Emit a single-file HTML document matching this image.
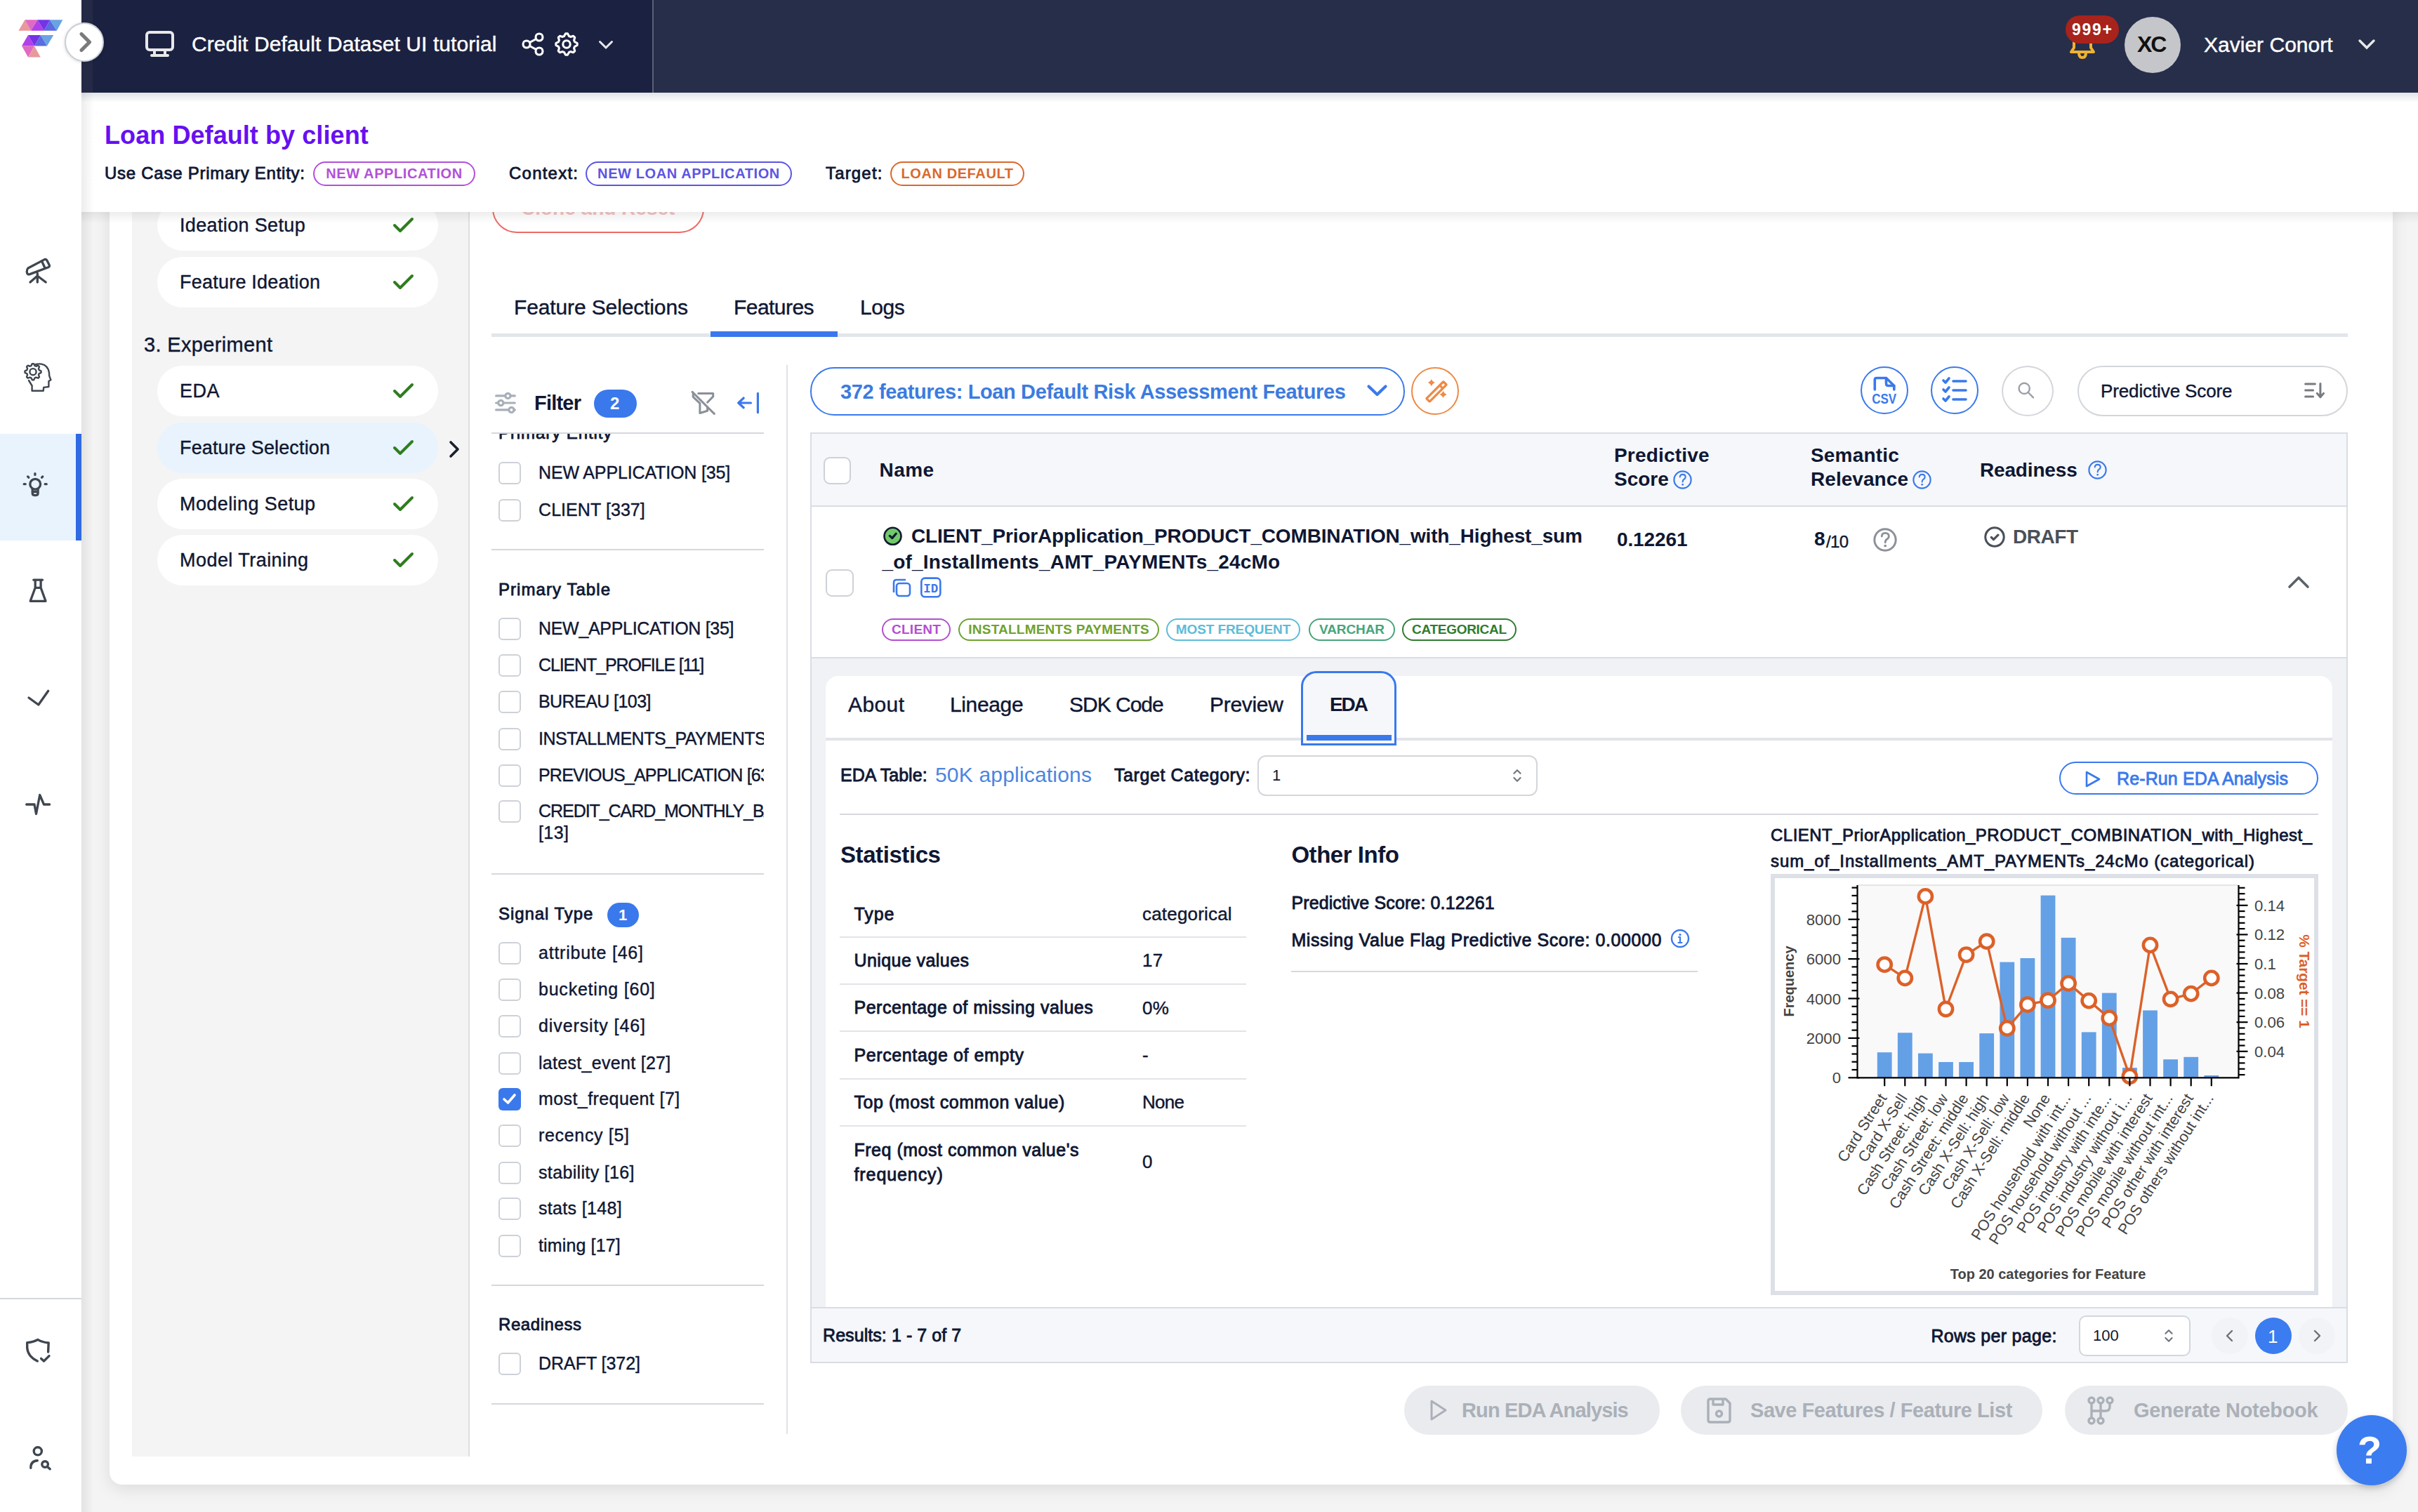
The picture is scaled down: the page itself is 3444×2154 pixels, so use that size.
<!DOCTYPE html><html><head><meta charset="utf-8"><style>
html,body{margin:0;padding:0;width:3444px;height:2154px;overflow:hidden;font-family:"Liberation Sans",sans-serif;}
.t{position:absolute;white-space:nowrap;line-height:1;}
.r{position:absolute;display:block;}
</style></head><body>
<div class="r" style="left:0.0px;top:0.0px;width:3444.0px;height:2154.0px;background:#f4f4f4;"></div>
<div class="r" style="left:156.0px;top:150.0px;width:3252.0px;height:1965.0px;background:#ffffff;border-radius:18px;box-shadow:0 6px 24px rgba(0,0,0,0.10);"></div>
<div class="r" style="left:188.0px;top:150.0px;width:479.0px;height:1925.0px;background:#f4f4f4;border-right:2px solid #dcdfe4;"></div>
<div class="r" style="left:224.0px;top:285.0px;width:400.0px;height:72.0px;background:#ffffff;border-radius:36px;"></div>
<div class="t" style="left:256.0px;top:307.5px;font-size:27px;letter-spacing:0.351px;color:#0f1733;-webkit-text-stroke:0.4px #0f1733;">Ideation Setup</div>
<svg class="r" style="left:558px;top:305px;" width="34" height="30" viewBox="0 0 34 30"><path d="M4 16 L12 24 L29 7" fill="none" stroke="#2f7d1f" stroke-width="4" stroke-linecap="round" stroke-linejoin="round"/></svg>
<div class="r" style="left:224.0px;top:366.0px;width:400.0px;height:72.0px;background:#ffffff;border-radius:36px;"></div>
<div class="t" style="left:256.0px;top:388.5px;font-size:27px;letter-spacing:0.225px;color:#0f1733;-webkit-text-stroke:0.4px #0f1733;">Feature Ideation</div>
<svg class="r" style="left:558px;top:386px;" width="34" height="30" viewBox="0 0 34 30"><path d="M4 16 L12 24 L29 7" fill="none" stroke="#2f7d1f" stroke-width="4" stroke-linecap="round" stroke-linejoin="round"/></svg>
<div class="t" style="left:205.0px;top:476.5px;font-size:29px;letter-spacing:0.341px;color:#0f1733;-webkit-text-stroke:0.4px #0f1733;">3. Experiment</div>
<div class="r" style="left:224.0px;top:521.0px;width:400.0px;height:72.0px;background:#ffffff;border-radius:36px;"></div>
<div class="t" style="left:256.0px;top:543.5px;font-size:27px;letter-spacing:0.5px;color:#0f1733;-webkit-text-stroke:0.4px #0f1733;">EDA</div>
<svg class="r" style="left:558px;top:541px;" width="34" height="30" viewBox="0 0 34 30"><path d="M4 16 L12 24 L29 7" fill="none" stroke="#2f7d1f" stroke-width="4" stroke-linecap="round" stroke-linejoin="round"/></svg>
<div class="r" style="left:224.0px;top:602.0px;width:400.0px;height:72.0px;background:#e8f3fd;border-radius:36px;"></div>
<div class="t" style="left:256.0px;top:624.5px;font-size:27px;letter-spacing:0.148px;color:#0f1733;-webkit-text-stroke:0.4px #0f1733;">Feature Selection</div>
<svg class="r" style="left:558px;top:622px;" width="34" height="30" viewBox="0 0 34 30"><path d="M4 16 L12 24 L29 7" fill="none" stroke="#2f7d1f" stroke-width="4" stroke-linecap="round" stroke-linejoin="round"/></svg>
<div class="r" style="left:224.0px;top:682.0px;width:400.0px;height:72.0px;background:#ffffff;border-radius:36px;"></div>
<div class="t" style="left:256.0px;top:704.5px;font-size:27px;letter-spacing:0.413px;color:#0f1733;-webkit-text-stroke:0.4px #0f1733;">Modeling Setup</div>
<svg class="r" style="left:558px;top:702px;" width="34" height="30" viewBox="0 0 34 30"><path d="M4 16 L12 24 L29 7" fill="none" stroke="#2f7d1f" stroke-width="4" stroke-linecap="round" stroke-linejoin="round"/></svg>
<div class="r" style="left:224.0px;top:762.0px;width:400.0px;height:72.0px;background:#ffffff;border-radius:36px;"></div>
<div class="t" style="left:256.0px;top:784.5px;font-size:27px;letter-spacing:0.454px;color:#0f1733;-webkit-text-stroke:0.4px #0f1733;">Model Training</div>
<svg class="r" style="left:558px;top:782px;" width="34" height="30" viewBox="0 0 34 30"><path d="M4 16 L12 24 L29 7" fill="none" stroke="#2f7d1f" stroke-width="4" stroke-linecap="round" stroke-linejoin="round"/></svg>
<svg class="r" style="left:634px;top:624px;" width="26" height="32" viewBox="0 0 26 32"><path d="M8 6 L18 16 L8 26" fill="none" stroke="#1a1f2e" stroke-width="3.6" stroke-linecap="round" stroke-linejoin="round"/></svg>
<div class="r" style="left:701.0px;top:262.0px;width:302.0px;height:70.0px;background:#fff;border:2px solid #ee6a64;box-sizing:border-box;border-radius:35px;"></div>
<div class="t" style="left:742.0px;top:283.0px;font-size:28px;font-weight:700;color:#f2c2bf;">Clone and Reset</div>
<div class="t" style="left:732.0px;top:423.0px;font-size:30px;letter-spacing:-0.127px;color:#0f1733;-webkit-text-stroke:0.4px #0f1733;">Feature Selections</div>
<div class="t" style="left:1045.0px;top:423.0px;font-size:30px;letter-spacing:-0.542px;color:#0f1733;-webkit-text-stroke:0.4px #0f1733;">Features</div>
<div class="t" style="left:1225.0px;top:423.0px;font-size:30px;letter-spacing:-0.421px;color:#0f1733;-webkit-text-stroke:0.4px #0f1733;">Logs</div>
<div class="r" style="left:700.0px;top:475.0px;width:2644.0px;height:5.0px;background:#e2e5ea;"></div>
<div class="r" style="left:1012.0px;top:472.0px;width:181.0px;height:8.0px;background:#3b78ee;"></div>
<svg class="r" style="left:700px;top:554px;" width="40" height="40" viewBox="0 0 40 40"><g fill="none" stroke="#a8afb8" stroke-width="3.2" stroke-linecap="round"><path d="M6.6 9.9 L33.3 9.9 M6.6 20 L33.3 20 M6.6 29.9 L33.3 29.9"/><circle cx="23.4" cy="9.9" r="3.6" fill="#fff"/><circle cx="13.3" cy="20" r="3.6" fill="#fff"/><circle cx="28.4" cy="29.9" r="3.6" fill="#fff"/></g></svg>
<div class="t" style="left:761.0px;top:559.5px;font-size:29px;font-weight:700;letter-spacing:-0.781px;color:#0f1733;">Filter</div>
<div class="r" style="left:846.0px;top:555.0px;width:61.0px;height:40.0px;background:#3a79ec;border-radius:20px;"></div>
<div class="t" style="left:869.0px;top:563.0px;font-size:24px;font-weight:700;color:#fff;">2</div>
<svg class="r" style="left:982px;top:550px;" width="40" height="46" viewBox="0 0 40 46"><g fill="none" stroke="#8a9099" stroke-width="3" stroke-linecap="round" stroke-linejoin="round"><path d="M4.1 8.4 L35.3 39.4"/><path d="M12.7 10.6 L33.7 10.6 L33.7 14.9 L25.6 23.2"/><path d="M5.2 11.1 L5.2 15.4 L14.9 24.6 L14.9 38.5 L25.6 35.3 L25.6 30"/></g></svg>
<svg class="r" style="left:1046px;top:555px;" width="40" height="38" viewBox="0 0 40 38"><g fill="none" stroke="#3a79ec" stroke-width="3.2" stroke-linecap="round" stroke-linejoin="round"><path d="M33.4 5.3 L33.4 32.7 M23.5 19 L5.7 19 M13.2 12 L5.7 19 L13.2 25.8"/></g></svg>
<div class="r" style="left:700.0px;top:616.0px;width:388.0px;height:2.0px;background:#d4d8de;"></div>
<div class="r" style="left:1120.0px;top:520.0px;width:2.0px;height:1523.0px;background:#dfe2e6;"></div>
<div class="r" style="left:680px;top:618px;width:408px;height:1460px;overflow:hidden;">
<div class="t" style="left:30.0px;top:-13.0px;font-size:24px;letter-spacing:0.922px;color:#0f1733;-webkit-text-stroke:0.82px #0f1733;">Primary Entity</div>
<div class="r" style="left:29.5px;top:39.5px;width:32.0px;height:32.0px;background:#fff;border:2px solid #cdd1d8;box-sizing:border-box;border-radius:6px;"></div>
<div class="t" style="left:87.0px;top:42.5px;font-size:25px;letter-spacing:-0.143px;color:#0f1733;-webkit-text-stroke:0.4px #0f1733;">NEW APPLICATION [35]</div>
<div class="r" style="left:29.5px;top:92.5px;width:32.0px;height:32.0px;background:#fff;border:2px solid #cdd1d8;box-sizing:border-box;border-radius:6px;"></div>
<div class="t" style="left:87.0px;top:95.5px;font-size:25px;letter-spacing:0.071px;color:#0f1733;-webkit-text-stroke:0.4px #0f1733;">CLIENT [337]</div>
<div class="r" style="left:20.0px;top:164.0px;width:388.0px;height:2.0px;background:#d4d8de;"></div>
<div class="t" style="left:30.0px;top:210.0px;font-size:24px;letter-spacing:1.06px;color:#0f1733;-webkit-text-stroke:0.82px #0f1733;">Primary Table</div>
<div class="r" style="left:29.5px;top:261.5px;width:32.0px;height:32.0px;background:#fff;border:2px solid #cdd1d8;box-sizing:border-box;border-radius:6px;"></div>
<div class="t" style="left:87.0px;top:264.5px;font-size:25px;letter-spacing:-0.308px;color:#0f1733;-webkit-text-stroke:0.4px #0f1733;">NEW_APPLICATION [35]</div>
<div class="r" style="left:29.5px;top:313.5px;width:32.0px;height:32.0px;background:#fff;border:2px solid #cdd1d8;box-sizing:border-box;border-radius:6px;"></div>
<div class="t" style="left:87.0px;top:316.5px;font-size:25px;letter-spacing:-1.127px;color:#0f1733;-webkit-text-stroke:0.4px #0f1733;">CLIENT_PROFILE [11]</div>
<div class="r" style="left:29.5px;top:365.5px;width:32.0px;height:32.0px;background:#fff;border:2px solid #cdd1d8;box-sizing:border-box;border-radius:6px;"></div>
<div class="t" style="left:87.0px;top:368.5px;font-size:25px;letter-spacing:-0.576px;color:#0f1733;-webkit-text-stroke:0.4px #0f1733;">BUREAU [103]</div>
<div class="r" style="left:29.5px;top:418.5px;width:32.0px;height:32.0px;background:#fff;border:2px solid #cdd1d8;box-sizing:border-box;border-radius:6px;"></div>
<div class="t" style="left:87.0px;top:421.5px;font-size:25px;letter-spacing:-0.5px;color:#0f1733;-webkit-text-stroke:0.4px #0f1733;">INSTALLMENTS_PAYMENTS [29]</div>
<div class="r" style="left:29.5px;top:470.5px;width:32.0px;height:32.0px;background:#fff;border:2px solid #cdd1d8;box-sizing:border-box;border-radius:6px;"></div>
<div class="t" style="left:87.0px;top:473.5px;font-size:25px;letter-spacing:-0.8px;color:#0f1733;-webkit-text-stroke:0.4px #0f1733;">PREVIOUS_APPLICATION [63]</div>
<div class="r" style="left:29.5px;top:521.5px;width:32.0px;height:32.0px;background:#fff;border:2px solid #cdd1d8;box-sizing:border-box;border-radius:6px;"></div>
<div class="t" style="left:87.0px;top:524.5px;font-size:25px;letter-spacing:-1.05px;color:#0f1733;-webkit-text-stroke:0.4px #0f1733;">CREDIT_CARD_MONTHLY_BALANCE</div>
<div class="t" style="left:87.0px;top:555.5px;font-size:25px;letter-spacing:0.4px;color:#0f1733;-webkit-text-stroke:0.4px #0f1733;">[13]</div>
<div class="r" style="left:20.0px;top:626.0px;width:388.0px;height:2.0px;background:#d4d8de;"></div>
<div class="t" style="left:30.0px;top:672.0px;font-size:24px;letter-spacing:0.945px;color:#0f1733;-webkit-text-stroke:0.82px #0f1733;">Signal Type</div>
<div class="r" style="left:185.0px;top:668.0px;width:45.0px;height:35.0px;background:#3a79ec;border-radius:18px;"></div>
<div class="t" style="left:201.0px;top:675.0px;font-size:22px;font-weight:700;color:#fff;">1</div>
<div class="r" style="left:29.5px;top:723.5px;width:32.0px;height:32.0px;background:#fff;border:2px solid #cdd1d8;box-sizing:border-box;border-radius:6px;"></div>
<div class="t" style="left:87.0px;top:726.5px;font-size:25px;letter-spacing:0.767px;color:#0f1733;-webkit-text-stroke:0.4px #0f1733;">attribute [46]</div>
<div class="r" style="left:29.5px;top:775.5px;width:32.0px;height:32.0px;background:#fff;border:2px solid #cdd1d8;box-sizing:border-box;border-radius:6px;"></div>
<div class="t" style="left:87.0px;top:778.5px;font-size:25px;letter-spacing:0.777px;color:#0f1733;-webkit-text-stroke:0.4px #0f1733;">bucketing [60]</div>
<div class="r" style="left:29.5px;top:828.0px;width:32.0px;height:32.0px;background:#fff;border:2px solid #cdd1d8;box-sizing:border-box;border-radius:6px;"></div>
<div class="t" style="left:87.0px;top:831.0px;font-size:25px;letter-spacing:0.895px;color:#0f1733;-webkit-text-stroke:0.4px #0f1733;">diversity [46]</div>
<div class="r" style="left:29.5px;top:880.5px;width:32.0px;height:32.0px;background:#fff;border:2px solid #cdd1d8;box-sizing:border-box;border-radius:6px;"></div>
<div class="t" style="left:87.0px;top:883.5px;font-size:25px;letter-spacing:0.299px;color:#0f1733;-webkit-text-stroke:0.4px #0f1733;">latest_event [27]</div>
<div class="r" style="left:29.5px;top:931.9px;width:32.0px;height:32.0px;background:#3a79ec;border-radius:6px;"></div>
<svg class="r" style="left:29.5px;top:931.9000000000001px;" width="31" height="31" viewBox="0 0 31 31"><path d="M8 16 L13.5 21 L23 10" fill="none" stroke="#fff" stroke-width="3.6" stroke-linecap="round" stroke-linejoin="round"/></svg>
<div class="t" style="left:87.0px;top:934.9px;font-size:25px;letter-spacing:0.417px;color:#0f1733;-webkit-text-stroke:0.4px #0f1733;">most_frequent [7]</div>
<div class="r" style="left:29.5px;top:984.0px;width:32.0px;height:32.0px;background:#fff;border:2px solid #cdd1d8;box-sizing:border-box;border-radius:6px;"></div>
<div class="t" style="left:87.0px;top:987.0px;font-size:25px;letter-spacing:0.669px;color:#0f1733;-webkit-text-stroke:0.4px #0f1733;">recency [5]</div>
<div class="r" style="left:29.5px;top:1036.5px;width:32.0px;height:32.0px;background:#fff;border:2px solid #cdd1d8;box-sizing:border-box;border-radius:6px;"></div>
<div class="t" style="left:87.0px;top:1039.5px;font-size:25px;letter-spacing:0.351px;color:#0f1733;-webkit-text-stroke:0.4px #0f1733;">stability [16]</div>
<div class="r" style="left:29.5px;top:1088.2px;width:32.0px;height:32.0px;background:#fff;border:2px solid #cdd1d8;box-sizing:border-box;border-radius:6px;"></div>
<div class="t" style="left:87.0px;top:1091.2px;font-size:25px;letter-spacing:0.331px;color:#0f1733;-webkit-text-stroke:0.4px #0f1733;">stats [148]</div>
<div class="r" style="left:29.5px;top:1140.5px;width:32.0px;height:32.0px;background:#fff;border:2px solid #cdd1d8;box-sizing:border-box;border-radius:6px;"></div>
<div class="t" style="left:87.0px;top:1143.5px;font-size:25px;letter-spacing:0.134px;color:#0f1733;-webkit-text-stroke:0.4px #0f1733;">timing [17]</div>
<div class="r" style="left:20.0px;top:1212.0px;width:388.0px;height:2.0px;background:#d4d8de;"></div>
<div class="t" style="left:30.0px;top:1257.0px;font-size:24px;letter-spacing:0.578px;color:#0f1733;-webkit-text-stroke:0.82px #0f1733;">Readiness</div>
<div class="r" style="left:29.5px;top:1308.5px;width:32.0px;height:32.0px;background:#fff;border:2px solid #cdd1d8;box-sizing:border-box;border-radius:6px;"></div>
<div class="t" style="left:87.0px;top:1312.0px;font-size:25px;letter-spacing:-0.042px;color:#0f1733;-webkit-text-stroke:0.4px #0f1733;">DRAFT [372]</div>
<div class="r" style="left:20.0px;top:1381.0px;width:388.0px;height:2.0px;background:#d4d8de;"></div>
</div>
<div class="r" style="left:1154.0px;top:523.0px;width:847.0px;height:69.0px;background:#fff;border:2px solid #3a79ec;box-sizing:border-box;border-radius:34px;"></div>
<div class="t" style="left:1197.0px;top:543.5px;font-size:29px;font-weight:700;letter-spacing:-0.379px;color:#3b7be0;">372 features: Loan Default Risk Assessment Features</div>
<svg class="r" style="left:1940px;top:540px;" width="44" height="34" viewBox="0 0 44 34"><path d="M9.5 10.5 L21.5 22 L33.5 10.5" fill="none" stroke="#3a79ec" stroke-width="4.2" stroke-linecap="round" stroke-linejoin="round"/></svg>
<div class="r" style="left:2010.0px;top:523.0px;width:68.0px;height:68.0px;background:#fff;border:2px solid #ee8a45;box-sizing:border-box;border-radius:50%;"></div>
<svg class="r" style="left:2010px;top:523px;" width="68" height="68" viewBox="0 0 68 68"><g fill="none" stroke="#ee8a45" stroke-width="3.3" stroke-linejoin="round" transform="translate(36 34.9) rotate(-45)"><rect x="-17" y="-3.1" width="34" height="6.2" rx="0.8"/><path d="M9.6 -3.1 L9.6 3.1"/></g><g fill="#ee8a45"><path d="M28.8 17.200000000000003 Q30.172 20.728 33.7 22.1 Q30.172 23.472 28.8 27.0 Q27.428 23.472 23.9 22.1 Q27.428 20.728 28.8 17.200000000000003 Z"/><path d="M45.6 34.0 Q46.972 37.528 50.5 38.9 Q46.972 40.272 45.6 43.8 Q44.228 40.272 40.7 38.9 Q44.228 37.528 45.6 34.0 Z"/></g></svg>
<div class="r" style="left:2650.0px;top:522.0px;width:68.0px;height:68.0px;background:#fff;border:2px solid #3a79ec;box-sizing:border-box;border-radius:50%;"></div>
<svg class="r" style="left:2650px;top:522px;" width="68" height="68" viewBox="0 0 68 68"><g fill="none" stroke="#3a79ec" stroke-width="3.6" stroke-linejoin="round" stroke-linecap="round"><path d="M20.3 33 L20.3 19 Q20.3 16.5 22.8 16.5 L36.5 16.5 L47.8 27.5 L47.8 33"/><path d="M36.5 16.5 L36.5 24.5 Q36.5 27.5 39.5 27.5 L47.8 27.5"/></g><text x="33.7" y="53" text-anchor="middle" font-family="Liberation Sans" font-weight="700" font-size="20" textLength="35" lengthAdjust="spacingAndGlyphs" fill="#3a79ec">CSV</text></svg>
<div class="r" style="left:2750.0px;top:522.0px;width:68.0px;height:68.0px;background:#fff;border:2px solid #3a79ec;box-sizing:border-box;border-radius:50%;"></div>
<svg class="r" style="left:2750px;top:522px;" width="68" height="68" viewBox="0 0 68 68"><g fill="none" stroke="#3a79ec" stroke-width="3.6" stroke-linecap="round" stroke-linejoin="round"><path d="M18 20 L21 23 L26 17 M18 33 L21 36 L26 30 M18 46 L21 49 L26 43"/><path d="M32 21 L50 21 M32 34 L50 34 M32 47 L50 47"/></g></svg>
<div class="r" style="left:2851.0px;top:521.0px;width:74.0px;height:72.0px;background:#fff;border:2px solid #d3d6db;box-sizing:border-box;border-radius:50%;"></div>
<svg class="r" style="left:2851px;top:521px;" width="74" height="72" viewBox="0 0 74 72"><g fill="none" stroke="#9aa0a8" stroke-width="2.4" stroke-linecap="round"><circle cx="32.2" cy="32.4" r="7.6"/><path d="M37.8 38 L45 45.4"/></g></svg>
<div class="r" style="left:2959.0px;top:521.0px;width:385.0px;height:72.0px;background:#fff;border:2px solid #d3d6db;box-sizing:border-box;border-radius:36px;"></div>
<div class="t" style="left:2992.0px;top:544.0px;font-size:26px;letter-spacing:-0.118px;color:#0f1733;-webkit-text-stroke:0.4px #0f1733;">Predictive Score</div>
<svg class="r" style="left:3276px;top:540px;" width="40" height="36" viewBox="0 0 40 36"><g fill="none" stroke="#777b80" stroke-width="3" stroke-linecap="round" stroke-linejoin="round"><path d="M7.6 6.9 L21.4 6.9 M7.6 16 L18.6 16 M7.6 24.9 L18.6 24.9 M28.9 6.6 L28.9 25.6 M24.3 20.4 L28.9 25.8 L33.5 20.4"/></g></svg>
<div class="r" style="left:1154.0px;top:616.0px;width:2190.0px;height:1326.0px;background:#fff;border:2px solid #d9dde3;box-sizing:border-box;"></div>
<div class="r" style="left:1156.0px;top:618.0px;width:2186.0px;height:103.0px;background:#f5f7fa;"></div>
<div class="r" style="left:1156.0px;top:720.0px;width:2186.0px;height:2.0px;background:#d9dde3;"></div>
<div class="r" style="left:1172.5px;top:650.5px;width:39.5px;height:39.5px;background:#fff;border:2px solid #cdd1d8;box-sizing:border-box;border-radius:9px;"></div>
<div class="t" style="left:1252.5px;top:656.0px;font-size:28px;font-weight:700;letter-spacing:0.478px;color:#0f1733;">Name</div>
<div class="t" style="left:2299.0px;top:635.0px;font-size:28px;font-weight:700;letter-spacing:0.192px;color:#0f1733;">Predictive</div>
<div class="t" style="left:2299.0px;top:669.0px;font-size:28px;font-weight:700;color:#0f1733;">Score</div>
<svg class="r" style="left:2383px;top:670px;" width="27" height="27" viewBox="0 0 27 27"><circle cx="13.5" cy="13.5" r="12.1" fill="none" stroke="#3a79ec" stroke-width="2.2"/><g transform="scale(0.794)"><path d="M12.3 12 Q12.3 7.4 17.2 7.4 Q22.3 7.4 22.3 12 Q22.3 14.5 19.5 16.3 Q17.2 17.8 17.2 20.8" fill="none" stroke="#3a79ec" stroke-width="2.63" stroke-linecap="round"/><circle cx="17.2" cy="25.6" r="1.72" fill="#3a79ec"/></g></svg>
<div class="t" style="left:2579.0px;top:635.0px;font-size:28px;font-weight:700;letter-spacing:0.183px;color:#0f1733;">Semantic</div>
<div class="t" style="left:2579.0px;top:669.0px;font-size:28px;font-weight:700;letter-spacing:0.053px;color:#0f1733;">Relevance</div>
<svg class="r" style="left:2724px;top:670px;" width="27" height="27" viewBox="0 0 27 27"><circle cx="13.5" cy="13.5" r="12.1" fill="none" stroke="#3a79ec" stroke-width="2.2"/><g transform="scale(0.794)"><path d="M12.3 12 Q12.3 7.4 17.2 7.4 Q22.3 7.4 22.3 12 Q22.3 14.5 19.5 16.3 Q17.2 17.8 17.2 20.8" fill="none" stroke="#3a79ec" stroke-width="2.63" stroke-linecap="round"/><circle cx="17.2" cy="25.6" r="1.72" fill="#3a79ec"/></g></svg>
<div class="t" style="left:2820.0px;top:656.0px;font-size:28px;font-weight:700;letter-spacing:-0.164px;color:#0f1733;">Readiness</div>
<svg class="r" style="left:2974px;top:656px;" width="27" height="27" viewBox="0 0 27 27"><circle cx="13.5" cy="13.5" r="12.1" fill="none" stroke="#3a79ec" stroke-width="2.2"/><g transform="scale(0.794)"><path d="M12.3 12 Q12.3 7.4 17.2 7.4 Q22.3 7.4 22.3 12 Q22.3 14.5 19.5 16.3 Q17.2 17.8 17.2 20.8" fill="none" stroke="#3a79ec" stroke-width="2.63" stroke-linecap="round"/><circle cx="17.2" cy="25.6" r="1.72" fill="#3a79ec"/></g></svg>
<div class="r" style="left:1156.0px;top:936.0px;width:2186.0px;height:2.0px;background:#d9dde3;"></div>
<div class="r" style="left:1176.0px;top:810.5px;width:39.5px;height:39.5px;background:#fff;border:2px solid #cdd1d8;box-sizing:border-box;border-radius:9px;"></div>
<svg class="r" style="left:1258px;top:750px;" width="28" height="28" viewBox="0 0 28 28"><circle cx="13.5" cy="13.8" r="12" fill="#72c96b" stroke="#111a30" stroke-width="2.6"/><path d="M9.3 13.4 L12.8 16.6 L18.2 10.2" fill="none" stroke="#111a30" stroke-width="3.2" stroke-linecap="round" stroke-linejoin="round"/></svg>
<div class="t" style="left:1298.0px;top:750.0px;font-size:28px;font-weight:700;letter-spacing:-0.164px;color:#0f1733;">CLIENT_PriorApplication_PRODUCT_COMBINATION_with_Highest_sum</div>
<div class="t" style="left:1256.6px;top:787.0px;font-size:28px;font-weight:700;letter-spacing:0.155px;color:#0f1733;">_of_Installments_AMT_PAYMENTs_24cMo</div>
<svg class="r" style="left:1268px;top:822px;" width="32" height="30" viewBox="0 0 32 30"><g fill="none" stroke="#3a79ec" stroke-width="2.6" stroke-linejoin="round"><rect x="9" y="9" width="19" height="18" rx="4"/><path d="M5 22 L5 8 Q5 4 9 4 L22 4"/></g></svg>
<svg class="r" style="left:1309px;top:821px;" width="34" height="32" viewBox="0 0 34 32"><rect x="3.3" y="2.6" width="27" height="26.6" rx="5" fill="none" stroke="#3a79ec" stroke-width="2.6"/><text x="16.8" y="22.6" text-anchor="middle" font-family="Liberation Mono" font-weight="700" font-size="19" textLength="21" lengthAdjust="spacingAndGlyphs" fill="#3a79ec">ID</text></svg>
<div class="r" style="left:1256.0px;top:881.0px;width:98.0px;height:32.0px;background:#fff;border:2px solid #b44fd0;box-sizing:border-box;border-radius:16px;"></div>
<div class="t" style="left:1256.1px;top:881px;width:98px;height:32px;line-height:32px;text-align:center;font-size:19px;font-weight:700;letter-spacing:0.278px;color:#b44fd0">CLIENT</div>
<div class="r" style="left:1365.0px;top:881.0px;width:286.0px;height:32.0px;background:#fff;border:2px solid #6fa22e;box-sizing:border-box;border-radius:16px;"></div>
<div class="t" style="left:1365.1px;top:881px;width:286px;height:32px;line-height:32px;text-align:center;font-size:19px;font-weight:700;letter-spacing:0.215px;color:#6fa22e">INSTALLMENTS PAYMENTS</div>
<div class="r" style="left:1661.0px;top:881.0px;width:191.0px;height:32.0px;background:#fff;border:2px solid #5dbcd8;box-sizing:border-box;border-radius:16px;"></div>
<div class="t" style="left:1661.0px;top:881px;width:191px;height:32px;line-height:32px;text-align:center;font-size:19px;font-weight:700;letter-spacing:-0.098px;color:#5dbcd8">MOST FREQUENT</div>
<div class="r" style="left:1864.0px;top:881.0px;width:123.0px;height:32.0px;background:#fff;border:2px solid #47a57a;box-sizing:border-box;border-radius:16px;"></div>
<div class="t" style="left:1864.0px;top:881px;width:123px;height:32px;line-height:32px;text-align:center;font-size:19px;font-weight:700;letter-spacing:-0.096px;color:#47a57a">VARCHAR</div>
<div class="r" style="left:1997.0px;top:881.0px;width:163.0px;height:32.0px;background:#fff;border:2px solid #2e7c2e;box-sizing:border-box;border-radius:16px;"></div>
<div class="t" style="left:1996.9px;top:881px;width:163px;height:32px;line-height:32px;text-align:center;font-size:19px;font-weight:700;letter-spacing:-0.292px;color:#2e7c2e">CATEGORICAL</div>
<div class="t" style="left:2303.0px;top:755.0px;font-size:28px;font-weight:700;letter-spacing:-0.125px;color:#0f1733;">0.12261</div>
<div class="t" style="left:2584.0px;top:754.0px;font-size:28px;font-weight:700;color:#0f1733;">8</div>
<div class="t" style="left:2601.0px;top:759.5px;font-size:24px;letter-spacing:-0.68px;color:#0f1733;-webkit-text-stroke:0.4px #0f1733;">/10</div>
<svg class="r" style="left:2668px;top:752px;" width="34" height="34" viewBox="0 0 34 34"><circle cx="17.0" cy="17.0" r="15.2" fill="none" stroke="#8c9199" stroke-width="3.0"/><g transform="scale(1.000)"><path d="M12.3 12 Q12.3 7.4 17.2 7.4 Q22.3 7.4 22.3 12 Q22.3 14.5 19.5 16.3 Q17.2 17.8 17.2 20.8" fill="none" stroke="#8c9199" stroke-width="2.85" stroke-linecap="round"/><circle cx="17.2" cy="25.6" r="1.86" fill="#8c9199"/></g></svg>
<svg class="r" style="left:2824px;top:748px;" width="34" height="34" viewBox="0 0 34 34"><circle cx="17" cy="17" r="13.2" fill="none" stroke="#4a505a" stroke-width="3"/><path d="M12.3 17.4 L15.4 20.6 L21.9 14.2" fill="none" stroke="#4a505a" stroke-width="3.2" stroke-linecap="round" stroke-linejoin="round"/></svg>
<div class="t" style="left:2867.0px;top:751.0px;font-size:28px;font-weight:700;letter-spacing:-0.469px;color:#4a505a;">DRAFT</div>
<svg class="r" style="left:3256px;top:818px;" width="36" height="24" viewBox="0 0 36 24"><path d="M5 18 L18 5 L31 18" fill="none" stroke="#5b616a" stroke-width="3.6" stroke-linecap="round" stroke-linejoin="round"/></svg>
<div class="r" style="left:1156.0px;top:938.0px;width:2186.0px;height:925.0px;background:#f0f2f5;"></div>
<div class="r" style="left:1176.0px;top:963.0px;width:2146.0px;height:900.0px;background:#ffffff;border-radius:18px 18px 0 0;"></div>
<div class="t" style="left:1208.0px;top:989.0px;font-size:30px;letter-spacing:0.398px;color:#0f1733;-webkit-text-stroke:0.4px #0f1733;">About</div>
<div class="t" style="left:1353.0px;top:989.0px;font-size:30px;letter-spacing:-0.366px;color:#0f1733;-webkit-text-stroke:0.4px #0f1733;">Lineage</div>
<div class="t" style="left:1523.0px;top:989.0px;font-size:30px;letter-spacing:-1.009px;color:#0f1733;-webkit-text-stroke:0.4px #0f1733;">SDK Code</div>
<div class="t" style="left:1723.0px;top:989.0px;font-size:30px;letter-spacing:-0.303px;color:#0f1733;-webkit-text-stroke:0.4px #0f1733;">Preview</div>
<div class="r" style="left:1176.0px;top:1051.0px;width:2146.0px;height:4.0px;background:#e2e4e9;"></div>
<div class="r" style="left:1853.0px;top:956.0px;width:136.0px;height:106.0px;background:#f5f7fa;border:3px solid #3a79ec;box-sizing:border-box;border-radius:22px 22px 0 0;"></div>
<div class="r" style="left:1861.0px;top:1047.0px;width:121.0px;height:8.0px;background:#3a79ec;"></div>
<div class="t" style="left:1894.0px;top:990.0px;font-size:28px;font-weight:700;letter-spacing:-2.055px;color:#0f1733;">EDA</div>
<div class="t" style="left:1197.0px;top:1091.5px;font-size:25px;letter-spacing:0.041px;color:#0f1733;-webkit-text-stroke:0.85px #0f1733;">EDA Table:</div>
<div class="t" style="left:1332.0px;top:1089.0px;font-size:30px;letter-spacing:0.188px;color:#4a86e0;">50K applications</div>
<div class="t" style="left:1587.0px;top:1091.5px;font-size:25px;letter-spacing:0.583px;color:#0f1733;-webkit-text-stroke:0.85px #0f1733;">Target Category:</div>
<div class="r" style="left:1791.0px;top:1076.0px;width:399.0px;height:58.0px;background:#fff;border:2px solid #d3d6db;box-sizing:border-box;border-radius:12px;"></div>
<div class="t" style="left:1812.0px;top:1094.0px;font-size:22px;color:#0f1733;">1</div>
<svg class="r" style="left:2150px;top:1090px;" width="22" height="30" viewBox="0 0 22 30"><path d="M6.4 11.8 L11 7.2 L15.6 11.8 M6.4 18.1 L11 22.7 L15.6 18.1" fill="none" stroke="#70757d" stroke-width="2.1" stroke-linecap="round" stroke-linejoin="round"/></svg>
<div class="r" style="left:2933.0px;top:1085.0px;width:369.0px;height:47.0px;background:#fff;border:2px solid #3a79ec;box-sizing:border-box;border-radius:24px;"></div>
<svg class="r" style="left:2968px;top:1096px;" width="26" height="28" viewBox="0 0 26 28"><path d="M4 4 L22 14 L4 24 Z" fill="none" stroke="#3a79ec" stroke-width="2.6" stroke-linejoin="round"/></svg>
<div class="t" style="left:3015.0px;top:1096.5px;font-size:25px;letter-spacing:0.124px;color:#3a79ec;-webkit-text-stroke:0.85px #3a79ec;">Re-Run EDA Analysis</div>
<div class="r" style="left:1196.0px;top:1159.0px;width:2106.0px;height:2.0px;background:#d6d9de;"></div>
<div class="t" style="left:1197.0px;top:1200.5px;font-size:33px;font-weight:700;letter-spacing:-0.417px;color:#0f1733;">Statistics</div>
<div class="t" style="left:1839.4px;top:1200.5px;font-size:33px;font-weight:700;letter-spacing:-0.451px;color:#0f1733;">Other Info</div>
<div class="t" style="left:1216.5px;top:1289.5px;font-size:25px;letter-spacing:0.932px;color:#0f1733;-webkit-text-stroke:0.85px #0f1733;">Type</div>
<div class="t" style="left:1627.0px;top:1289.0px;font-size:26px;letter-spacing:0.19px;color:#0f1733;-webkit-text-stroke:0.4px #0f1733;">categorical</div>
<div class="t" style="left:1216.5px;top:1355.5px;font-size:25px;letter-spacing:0.42px;color:#0f1733;-webkit-text-stroke:0.85px #0f1733;">Unique values</div>
<div class="t" style="left:1627.0px;top:1355.0px;font-size:26px;letter-spacing:0.3px;color:#0f1733;-webkit-text-stroke:0.4px #0f1733;">17</div>
<div class="t" style="left:1216.5px;top:1423.0px;font-size:25px;letter-spacing:0.507px;color:#0f1733;-webkit-text-stroke:0.85px #0f1733;">Percentage of missing values</div>
<div class="t" style="left:1627.0px;top:1422.5px;font-size:26px;letter-spacing:0.3px;color:#0f1733;-webkit-text-stroke:0.4px #0f1733;">0%</div>
<div class="t" style="left:1216.5px;top:1490.5px;font-size:25px;letter-spacing:0.604px;color:#0f1733;-webkit-text-stroke:0.85px #0f1733;">Percentage of empty</div>
<div class="t" style="left:1627.0px;top:1490.0px;font-size:26px;letter-spacing:0.3px;color:#0f1733;-webkit-text-stroke:0.4px #0f1733;">-</div>
<div class="t" style="left:1216.5px;top:1557.5px;font-size:25px;letter-spacing:0.552px;color:#0f1733;-webkit-text-stroke:0.85px #0f1733;">Top (most common value)</div>
<div class="t" style="left:1627.0px;top:1557.0px;font-size:26px;letter-spacing:-0.763px;color:#0f1733;-webkit-text-stroke:0.4px #0f1733;">None</div>
<div class="r" style="left:1196.0px;top:1334.0px;width:579.0px;height:2.0px;background:#e2e4e8;"></div>
<div class="r" style="left:1196.0px;top:1401.0px;width:579.0px;height:2.0px;background:#e2e4e8;"></div>
<div class="r" style="left:1196.0px;top:1468.0px;width:579.0px;height:2.0px;background:#e2e4e8;"></div>
<div class="r" style="left:1196.0px;top:1536.0px;width:579.0px;height:2.0px;background:#e2e4e8;"></div>
<div class="r" style="left:1196.0px;top:1603.0px;width:579.0px;height:2.0px;background:#e2e4e8;"></div>
<div class="t" style="left:1216.5px;top:1625.5px;font-size:25px;letter-spacing:0.513px;color:#0f1733;-webkit-text-stroke:0.85px #0f1733;">Freq (most common value's</div>
<div class="t" style="left:1216.5px;top:1660.5px;font-size:25px;letter-spacing:0.912px;color:#0f1733;-webkit-text-stroke:0.85px #0f1733;">frequency)</div>
<div class="t" style="left:1627.0px;top:1642.0px;font-size:26px;color:#0f1733;-webkit-text-stroke:0.4px #0f1733;">0</div>
<div class="t" style="left:1839.4px;top:1273.5px;font-size:25px;letter-spacing:0.124px;color:#0f1733;-webkit-text-stroke:0.85px #0f1733;">Predictive Score: 0.12261</div>
<div class="t" style="left:1839.4px;top:1326.5px;font-size:25px;letter-spacing:0.567px;color:#0f1733;-webkit-text-stroke:0.85px #0f1733;">Missing Value Flag Predictive Score: 0.00000</div>
<svg class="r" style="left:2378px;top:1322px;" width="30" height="30" viewBox="0 0 30 30"><circle cx="15" cy="15" r="12" fill="none" stroke="#3a79ec" stroke-width="2.4"/><circle cx="15" cy="9.5" r="1.6" fill="#3a79ec"/><path d="M15 13 L15 21 M12.5 21 L17.5 21 M13 13 L15 13" fill="none" stroke="#3a79ec" stroke-width="2.2" stroke-linecap="round"/></svg>
<div class="r" style="left:1839.0px;top:1383.0px;width:579.0px;height:2.0px;background:#d6d9de;"></div>
<div class="t" style="left:2522.0px;top:1178.0px;font-size:24px;letter-spacing:0.487px;color:#0f1733;-webkit-text-stroke:0.82px #0f1733;">CLIENT_PriorApplication_PRODUCT_COMBINATION_with_Highest_</div>
<div class="t" style="left:2522.0px;top:1215.0px;font-size:24px;letter-spacing:0.895px;color:#0f1733;-webkit-text-stroke:0.82px #0f1733;">sum_of_Installments_AMT_PAYMENTs_24cMo (categorical)</div>
<div class="r" style="left:2522.0px;top:1245.0px;width:780.0px;height:600.0px;background:#fff;border:6px solid #dde0e6;box-sizing:border-box;"></div>
<svg class="r" style="left:2522px;top:1245px;" width="780" height="600" viewBox="0 0 780 600"><rect x="123.5" y="16" width="543.0" height="274.29999999999995" fill="#f9f9fa"/><line x1="123.5" y1="16" x2="666.5" y2="16" stroke="#e6e6e6" stroke-width="2"/><rect x="151.8" y="254.2" width="20.8" height="36.1" fill="#64a0e6"/><rect x="180.9" y="226.3" width="20.8" height="64.0" fill="#64a0e6"/><rect x="210.0" y="255.6" width="20.8" height="34.7" fill="#64a0e6"/><rect x="239.1" y="268.0" width="20.8" height="22.3" fill="#64a0e6"/><rect x="268.2" y="268.0" width="20.8" height="22.3" fill="#64a0e6"/><rect x="297.3" y="227.1" width="20.8" height="63.2" fill="#64a0e6"/><rect x="326.4" y="125.6" width="20.8" height="164.7" fill="#64a0e6"/><rect x="355.5" y="120.0" width="20.8" height="170.3" fill="#64a0e6"/><rect x="384.6" y="30.6" width="20.8" height="259.7" fill="#64a0e6"/><rect x="413.7" y="90.9" width="20.8" height="199.4" fill="#64a0e6"/><rect x="442.8" y="225.4" width="20.8" height="64.9" fill="#64a0e6"/><rect x="471.9" y="169.6" width="20.8" height="120.7" fill="#64a0e6"/><rect x="501.0" y="276.1" width="20.8" height="14.2" fill="#64a0e6"/><rect x="530.1" y="194.4" width="20.8" height="95.9" fill="#64a0e6"/><rect x="559.2" y="264.2" width="20.8" height="26.1" fill="#64a0e6"/><rect x="588.3" y="260.8" width="20.8" height="29.5" fill="#64a0e6"/><rect x="617.4" y="287.0" width="20.8" height="3.3" fill="#64a0e6"/><polyline points="162.2,129.2 191.3,148.4 220.4,31.9 249.5,192.5 278.6,115.1 307.7,96.2 336.8,219.9 365.9,186.2 395.0,180.2 424.1,155.9 453.2,180.6 482.3,205.4 511.4,288.4 540.5,101.4 569.6,178.3 598.7,170.6 627.8,148.4" fill="none" stroke="#dc6128" stroke-width="3.4" stroke-linejoin="round"/><circle cx="162.2" cy="129.2" r="9.6" fill="#fff" stroke="#dc6128" stroke-width="4.6"/><circle cx="191.3" cy="148.4" r="9.6" fill="#fff" stroke="#dc6128" stroke-width="4.6"/><circle cx="220.4" cy="31.9" r="9.6" fill="#fff" stroke="#dc6128" stroke-width="4.6"/><circle cx="249.5" cy="192.5" r="9.6" fill="#fff" stroke="#dc6128" stroke-width="4.6"/><circle cx="278.6" cy="115.1" r="9.6" fill="#fff" stroke="#dc6128" stroke-width="4.6"/><circle cx="307.7" cy="96.2" r="9.6" fill="#fff" stroke="#dc6128" stroke-width="4.6"/><circle cx="336.8" cy="219.9" r="9.6" fill="#fff" stroke="#dc6128" stroke-width="4.6"/><circle cx="365.9" cy="186.2" r="9.6" fill="#fff" stroke="#dc6128" stroke-width="4.6"/><circle cx="395.0" cy="180.2" r="9.6" fill="#fff" stroke="#dc6128" stroke-width="4.6"/><circle cx="424.1" cy="155.9" r="9.6" fill="#fff" stroke="#dc6128" stroke-width="4.6"/><circle cx="453.2" cy="180.6" r="9.6" fill="#fff" stroke="#dc6128" stroke-width="4.6"/><circle cx="482.3" cy="205.4" r="9.6" fill="#fff" stroke="#dc6128" stroke-width="4.6"/><circle cx="511.4" cy="288.4" r="9.6" fill="#fff" stroke="#dc6128" stroke-width="4.6"/><circle cx="540.5" cy="101.4" r="9.6" fill="#fff" stroke="#dc6128" stroke-width="4.6"/><circle cx="569.6" cy="178.3" r="9.6" fill="#fff" stroke="#dc6128" stroke-width="4.6"/><circle cx="598.7" cy="170.6" r="9.6" fill="#fff" stroke="#dc6128" stroke-width="4.6"/><circle cx="627.8" cy="148.4" r="9.6" fill="#fff" stroke="#dc6128" stroke-width="4.6"/><path d="M123.5 16 L123.5 290.29999999999995 L666.5 290.29999999999995 L666.5 16" fill="none" stroke="#000" stroke-width="2.2"/><line x1="110.5" y1="290.3" x2="126.5" y2="290.3" stroke="#000" stroke-width="2.2"/><text x="100" y="298.3" text-anchor="end" font-family="Liberation Sans" font-size="22.2" fill="#444">0</text><line x1="115.5" y1="279.0" x2="123.5" y2="279.0" stroke="#000" stroke-width="2.2"/><line x1="115.5" y1="267.7" x2="123.5" y2="267.7" stroke="#000" stroke-width="2.2"/><line x1="115.5" y1="256.5" x2="123.5" y2="256.5" stroke="#000" stroke-width="2.2"/><line x1="115.5" y1="245.2" x2="123.5" y2="245.2" stroke="#000" stroke-width="2.2"/><line x1="110.5" y1="233.9" x2="126.5" y2="233.9" stroke="#000" stroke-width="2.2"/><text x="100" y="241.9" text-anchor="end" font-family="Liberation Sans" font-size="22.2" fill="#444">2000</text><line x1="115.5" y1="222.6" x2="123.5" y2="222.6" stroke="#000" stroke-width="2.2"/><line x1="115.5" y1="211.3" x2="123.5" y2="211.3" stroke="#000" stroke-width="2.2"/><line x1="115.5" y1="200.1" x2="123.5" y2="200.1" stroke="#000" stroke-width="2.2"/><line x1="115.5" y1="188.8" x2="123.5" y2="188.8" stroke="#000" stroke-width="2.2"/><line x1="110.5" y1="177.5" x2="126.5" y2="177.5" stroke="#000" stroke-width="2.2"/><text x="100" y="185.5" text-anchor="end" font-family="Liberation Sans" font-size="22.2" fill="#444">4000</text><line x1="115.5" y1="166.2" x2="123.5" y2="166.2" stroke="#000" stroke-width="2.2"/><line x1="115.5" y1="154.9" x2="123.5" y2="154.9" stroke="#000" stroke-width="2.2"/><line x1="115.5" y1="143.7" x2="123.5" y2="143.7" stroke="#000" stroke-width="2.2"/><line x1="115.5" y1="132.4" x2="123.5" y2="132.4" stroke="#000" stroke-width="2.2"/><line x1="110.5" y1="121.1" x2="126.5" y2="121.1" stroke="#000" stroke-width="2.2"/><text x="100" y="129.1" text-anchor="end" font-family="Liberation Sans" font-size="22.2" fill="#444">6000</text><line x1="115.5" y1="109.8" x2="123.5" y2="109.8" stroke="#000" stroke-width="2.2"/><line x1="115.5" y1="98.5" x2="123.5" y2="98.5" stroke="#000" stroke-width="2.2"/><line x1="115.5" y1="87.3" x2="123.5" y2="87.3" stroke="#000" stroke-width="2.2"/><line x1="115.5" y1="76.0" x2="123.5" y2="76.0" stroke="#000" stroke-width="2.2"/><line x1="110.5" y1="64.7" x2="126.5" y2="64.7" stroke="#000" stroke-width="2.2"/><text x="100" y="72.7" text-anchor="end" font-family="Liberation Sans" font-size="22.2" fill="#444">8000</text><line x1="115.5" y1="53.4" x2="123.5" y2="53.4" stroke="#000" stroke-width="2.2"/><line x1="115.5" y1="42.1" x2="123.5" y2="42.1" stroke="#000" stroke-width="2.2"/><line x1="115.5" y1="30.9" x2="123.5" y2="30.9" stroke="#000" stroke-width="2.2"/><line x1="115.5" y1="19.6" x2="123.5" y2="19.6" stroke="#000" stroke-width="2.2"/><line x1="666.5" y1="286.1" x2="675.5" y2="286.1" stroke="#000" stroke-width="2.2"/><line x1="666.5" y1="277.8" x2="675.5" y2="277.8" stroke="#000" stroke-width="2.2"/><line x1="666.5" y1="269.4" x2="675.5" y2="269.4" stroke="#000" stroke-width="2.2"/><line x1="666.5" y1="261.1" x2="675.5" y2="261.1" stroke="#000" stroke-width="2.2"/><line x1="663.5" y1="252.8" x2="679.5" y2="252.8" stroke="#000" stroke-width="2.2"/><text x="689" y="260.8" font-family="Liberation Sans" font-size="22.2" fill="#444">0.04</text><line x1="666.5" y1="244.5" x2="675.5" y2="244.5" stroke="#000" stroke-width="2.2"/><line x1="666.5" y1="236.2" x2="675.5" y2="236.2" stroke="#000" stroke-width="2.2"/><line x1="666.5" y1="227.8" x2="675.5" y2="227.8" stroke="#000" stroke-width="2.2"/><line x1="666.5" y1="219.5" x2="675.5" y2="219.5" stroke="#000" stroke-width="2.2"/><line x1="663.5" y1="211.2" x2="679.5" y2="211.2" stroke="#000" stroke-width="2.2"/><text x="689" y="219.2" font-family="Liberation Sans" font-size="22.2" fill="#444">0.06</text><line x1="666.5" y1="202.9" x2="675.5" y2="202.9" stroke="#000" stroke-width="2.2"/><line x1="666.5" y1="194.6" x2="675.5" y2="194.6" stroke="#000" stroke-width="2.2"/><line x1="666.5" y1="186.2" x2="675.5" y2="186.2" stroke="#000" stroke-width="2.2"/><line x1="666.5" y1="177.9" x2="675.5" y2="177.9" stroke="#000" stroke-width="2.2"/><line x1="663.5" y1="169.6" x2="679.5" y2="169.6" stroke="#000" stroke-width="2.2"/><text x="689" y="177.6" font-family="Liberation Sans" font-size="22.2" fill="#444">0.08</text><line x1="666.5" y1="161.3" x2="675.5" y2="161.3" stroke="#000" stroke-width="2.2"/><line x1="666.5" y1="153.0" x2="675.5" y2="153.0" stroke="#000" stroke-width="2.2"/><line x1="666.5" y1="144.6" x2="675.5" y2="144.6" stroke="#000" stroke-width="2.2"/><line x1="666.5" y1="136.3" x2="675.5" y2="136.3" stroke="#000" stroke-width="2.2"/><line x1="663.5" y1="128.0" x2="679.5" y2="128.0" stroke="#000" stroke-width="2.2"/><text x="689" y="136.0" font-family="Liberation Sans" font-size="22.2" fill="#444">0.1</text><line x1="666.5" y1="119.7" x2="675.5" y2="119.7" stroke="#000" stroke-width="2.2"/><line x1="666.5" y1="111.4" x2="675.5" y2="111.4" stroke="#000" stroke-width="2.2"/><line x1="666.5" y1="103.0" x2="675.5" y2="103.0" stroke="#000" stroke-width="2.2"/><line x1="666.5" y1="94.7" x2="675.5" y2="94.7" stroke="#000" stroke-width="2.2"/><line x1="663.5" y1="86.4" x2="679.5" y2="86.4" stroke="#000" stroke-width="2.2"/><text x="689" y="94.4" font-family="Liberation Sans" font-size="22.2" fill="#444">0.12</text><line x1="666.5" y1="78.1" x2="675.5" y2="78.1" stroke="#000" stroke-width="2.2"/><line x1="666.5" y1="69.8" x2="675.5" y2="69.8" stroke="#000" stroke-width="2.2"/><line x1="666.5" y1="61.4" x2="675.5" y2="61.4" stroke="#000" stroke-width="2.2"/><line x1="666.5" y1="53.1" x2="675.5" y2="53.1" stroke="#000" stroke-width="2.2"/><line x1="663.5" y1="44.8" x2="679.5" y2="44.8" stroke="#000" stroke-width="2.2"/><text x="689" y="52.8" font-family="Liberation Sans" font-size="22.2" fill="#444">0.14</text><line x1="666.5" y1="36.5" x2="675.5" y2="36.5" stroke="#000" stroke-width="2.2"/><line x1="666.5" y1="28.2" x2="675.5" y2="28.2" stroke="#000" stroke-width="2.2"/><line x1="666.5" y1="19.8" x2="675.5" y2="19.8" stroke="#000" stroke-width="2.2"/><line x1="162.2" y1="290.29999999999995" x2="162.2" y2="302.29999999999995" stroke="#000" stroke-width="2.2"/><text transform="translate(166.2,319.3) rotate(-57.3)" text-anchor="end" font-family="Liberation Sans" font-size="21.6" fill="#444">Card Street</text><line x1="191.3" y1="290.29999999999995" x2="191.3" y2="302.29999999999995" stroke="#000" stroke-width="2.2"/><text transform="translate(195.3,319.3) rotate(-57.3)" text-anchor="end" font-family="Liberation Sans" font-size="21.6" fill="#444">Card X-Sell</text><line x1="220.4" y1="290.29999999999995" x2="220.4" y2="302.29999999999995" stroke="#000" stroke-width="2.2"/><text transform="translate(224.4,319.3) rotate(-57.3)" text-anchor="end" font-family="Liberation Sans" font-size="21.6" fill="#444">Cash Street: high</text><line x1="249.5" y1="290.29999999999995" x2="249.5" y2="302.29999999999995" stroke="#000" stroke-width="2.2"/><text transform="translate(253.5,319.3) rotate(-57.3)" text-anchor="end" font-family="Liberation Sans" font-size="21.6" fill="#444">Cash Street: low</text><line x1="278.6" y1="290.29999999999995" x2="278.6" y2="302.29999999999995" stroke="#000" stroke-width="2.2"/><text transform="translate(282.6,319.3) rotate(-57.3)" text-anchor="end" font-family="Liberation Sans" font-size="21.6" fill="#444">Cash Street: middle</text><line x1="307.7" y1="290.29999999999995" x2="307.7" y2="302.29999999999995" stroke="#000" stroke-width="2.2"/><text transform="translate(311.7,319.3) rotate(-57.3)" text-anchor="end" font-family="Liberation Sans" font-size="21.6" fill="#444">Cash X-Sell: high</text><line x1="336.8" y1="290.29999999999995" x2="336.8" y2="302.29999999999995" stroke="#000" stroke-width="2.2"/><text transform="translate(340.8,319.3) rotate(-57.3)" text-anchor="end" font-family="Liberation Sans" font-size="21.6" fill="#444">Cash X-Sell: low</text><line x1="365.9" y1="290.29999999999995" x2="365.9" y2="302.29999999999995" stroke="#000" stroke-width="2.2"/><text transform="translate(369.9,319.3) rotate(-57.3)" text-anchor="end" font-family="Liberation Sans" font-size="21.6" fill="#444">Cash X-Sell: middle</text><line x1="395.0" y1="290.29999999999995" x2="395.0" y2="302.29999999999995" stroke="#000" stroke-width="2.2"/><text transform="translate(399.0,319.3) rotate(-57.3)" text-anchor="end" font-family="Liberation Sans" font-size="21.6" fill="#444">None</text><line x1="424.1" y1="290.29999999999995" x2="424.1" y2="302.29999999999995" stroke="#000" stroke-width="2.2"/><text transform="translate(428.1,319.3) rotate(-57.3)" text-anchor="end" font-family="Liberation Sans" font-size="21.6" fill="#444">POS household with int...</text><line x1="453.2" y1="290.29999999999995" x2="453.2" y2="302.29999999999995" stroke="#000" stroke-width="2.2"/><text transform="translate(457.2,319.3) rotate(-57.3)" text-anchor="end" font-family="Liberation Sans" font-size="21.6" fill="#444">POS household without ...</text><line x1="482.3" y1="290.29999999999995" x2="482.3" y2="302.29999999999995" stroke="#000" stroke-width="2.2"/><text transform="translate(486.3,319.3) rotate(-57.3)" text-anchor="end" font-family="Liberation Sans" font-size="21.6" fill="#444">POS industry with inte...</text><line x1="511.4" y1="290.29999999999995" x2="511.4" y2="302.29999999999995" stroke="#000" stroke-width="2.2"/><text transform="translate(515.4,319.3) rotate(-57.3)" text-anchor="end" font-family="Liberation Sans" font-size="21.6" fill="#444">POS industry without i...</text><line x1="540.5" y1="290.29999999999995" x2="540.5" y2="302.29999999999995" stroke="#000" stroke-width="2.2"/><text transform="translate(544.5,319.3) rotate(-57.3)" text-anchor="end" font-family="Liberation Sans" font-size="21.6" fill="#444">POS mobile with interest</text><line x1="569.6" y1="290.29999999999995" x2="569.6" y2="302.29999999999995" stroke="#000" stroke-width="2.2"/><text transform="translate(573.6,319.3) rotate(-57.3)" text-anchor="end" font-family="Liberation Sans" font-size="21.6" fill="#444">POS mobile without int...</text><line x1="598.7" y1="290.29999999999995" x2="598.7" y2="302.29999999999995" stroke="#000" stroke-width="2.2"/><text transform="translate(602.7,319.3) rotate(-57.3)" text-anchor="end" font-family="Liberation Sans" font-size="21.6" fill="#444">POS other with interest</text><line x1="627.8" y1="290.29999999999995" x2="627.8" y2="302.29999999999995" stroke="#000" stroke-width="2.2"/><text transform="translate(631.8,319.3) rotate(-57.3)" text-anchor="end" font-family="Liberation Sans" font-size="21.6" fill="#444">POS others without int...</text><text transform="translate(33,153) rotate(-90)" text-anchor="middle" font-family="Liberation Sans" font-weight="700" font-size="20" fill="#444">Frequency</text><text transform="translate(753,153) rotate(90)" text-anchor="middle" font-family="Liberation Sans" font-weight="700" font-size="20.8" fill="#dc6128">% Target == 1</text><text x="395" y="577" text-anchor="middle" font-family="Liberation Sans" font-weight="700" font-size="20" fill="#444">Top 20 categories for Feature</text></svg>
<div class="r" style="left:1156.0px;top:1863.0px;width:2186.0px;height:77.0px;background:#f5f7fa;"></div>
<div class="r" style="left:1156.0px;top:1862.0px;width:2186.0px;height:2.0px;background:#d9dde3;"></div>
<div class="t" style="left:1172.0px;top:1889.5px;font-size:25px;letter-spacing:0.073px;color:#0f1733;-webkit-text-stroke:0.85px #0f1733;">Results: 1 - 7 of 7</div>
<div class="t" style="left:2750.4px;top:1890.5px;font-size:25px;letter-spacing:0.298px;color:#0f1733;-webkit-text-stroke:0.85px #0f1733;">Rows per page:</div>
<div class="r" style="left:2961.0px;top:1874.0px;width:159.0px;height:58.0px;background:#fff;border:2px solid #d3d6db;box-sizing:border-box;border-radius:10px;"></div>
<div class="t" style="left:2981.0px;top:1892.0px;font-size:22px;color:#0f1733;">100</div>
<svg class="r" style="left:3078px;top:1888px;" width="22" height="30" viewBox="0 0 22 30"><path d="M6.4 11.8 L11 7.2 L15.6 11.8 M6.4 18.1 L11 22.7 L15.6 18.1" fill="none" stroke="#70757d" stroke-width="2.1" stroke-linecap="round" stroke-linejoin="round"/></svg>
<div class="r" style="left:3150.0px;top:1877.0px;width:52.0px;height:52.0px;background:#f2f3f6;border-radius:50%;"></div>
<svg class="r" style="left:3150px;top:1877px;" width="52" height="52" viewBox="0 0 52 52"><path d="M29 19 L22 26 L29 33" fill="none" stroke="#6b7078" stroke-width="2.4" stroke-linecap="round" stroke-linejoin="round"/></svg>
<div class="r" style="left:3212.0px;top:1877.0px;width:52.0px;height:52.0px;background:#3b7cf0;border-radius:50%;"></div>
<div class="t" style="left:3230.0px;top:1891.0px;font-size:26px;color:#fff;">1</div>
<div class="r" style="left:3274.0px;top:1877.0px;width:52.0px;height:52.0px;background:#f2f3f6;border-radius:50%;"></div>
<svg class="r" style="left:3274px;top:1877px;" width="52" height="52" viewBox="0 0 52 52"><path d="M23 19 L30 26 L23 33" fill="none" stroke="#6b7078" stroke-width="2.4" stroke-linecap="round" stroke-linejoin="round"/></svg>
<div class="r" style="left:2000.0px;top:1974.0px;width:364.0px;height:70.0px;background:#e9ebee;border-radius:35px;"></div>
<svg class="r" style="left:2034px;top:1992px;" width="30" height="34" viewBox="0 0 30 34"><path d="M5 4 L25 17 L5 30 Z" fill="none" stroke="#abb0b8" stroke-width="3" stroke-linejoin="round"/></svg>
<div class="t" style="left:2082.0px;top:1994.5px;font-size:29px;font-weight:700;letter-spacing:-0.876px;color:#abb0b8;">Run EDA Analysis</div>
<div class="r" style="left:2394.0px;top:1974.0px;width:515.0px;height:70.0px;background:#e9ebee;border-radius:35px;"></div>
<svg class="r" style="left:2428px;top:1990px;" width="40" height="40" viewBox="0 0 40 40"><g fill="none" stroke="#abb0b8" stroke-width="3.4" stroke-linejoin="round"><path d="M5 6 Q5 3 8 3 L30 3 L36 9 L36 33 Q36 36 33 36 L8 36 Q5 36 5 33 Z"/><path d="M12 3 L12 11 L26 11 L26 3"/><circle cx="20.5" cy="24" r="4"/></g></svg>
<div class="t" style="left:2493.0px;top:1994.5px;font-size:29px;font-weight:700;letter-spacing:-0.441px;color:#abb0b8;">Save Features / Feature List</div>
<div class="r" style="left:2941.0px;top:1974.0px;width:403.0px;height:70.0px;background:#e9ebee;border-radius:35px;"></div>
<svg class="r" style="left:2972px;top:1988px;" width="46" height="44" viewBox="0 0 46 44"><g fill="none" stroke="#abb0b8" stroke-width="3.4"><circle cx="7" cy="7" r="4"/><circle cx="20" cy="7" r="4"/><circle cx="33" cy="7" r="4"/><circle cx="7" cy="36" r="4"/><circle cx="20" cy="36" r="4"/><path d="M7 11 L7 32 M20 11 L20 32 M33 11 L33 16 Q33 22 27 22 L7 22"/></g></svg>
<div class="t" style="left:3039.0px;top:1994.5px;font-size:29px;font-weight:700;letter-spacing:-0.306px;color:#abb0b8;">Generate Notebook</div>
<div class="r" style="left:3328.0px;top:2016.0px;width:100.0px;height:100.0px;background:#3b7cf0;border-radius:50%;box-shadow:0 3px 8px rgba(0,0,0,0.2);"></div>
<div class="t" style="left:3358.0px;top:2038.0px;font-size:56px;font-weight:700;color:#fff;">?</div>
<div class="r" style="left:0.0px;top:0.0px;width:116.0px;height:2154.0px;background:#ffffff;"></div>
<div class="r" style="left:0.0px;top:618.0px;width:116.0px;height:152.0px;background:#e8f3fd;"></div>
<div class="r" style="left:108.0px;top:618.0px;width:8.0px;height:152.0px;background:#2f6ae3;"></div>
<div class="r" style="left:0.0px;top:1849.0px;width:116.0px;height:2.0px;background:#d3d8de;"></div>
<svg class="r" style="left:30px;top:360px;" width="50" height="50" viewBox="0 0 50 50"><g fill="none" stroke="#3f4650" stroke-width="3.3" stroke-linecap="round" stroke-linejoin="round"><path d="M10 22 L33.5 9.6 Q35.5 8.8 36.6 10.6 L40.2 17.6 Q41 19.8 38.8 20.8 L12.5 30.6 Q8.6 31.8 8.2 27.2 Q8.2 23.6 10 22 Z"/><path d="M29.5 12 L34.2 22"/><path d="M23.3 29.5 L23.3 42 M23.3 33 L13 42 M23.3 33 L35.2 42"/></g></svg>
<svg class="r" style="left:30px;top:510px;" width="50" height="52" viewBox="0 0 50 52"><g fill="none" stroke="#3f4650" stroke-width="2.4" stroke-linejoin="round" stroke-linecap="round"><path d="M21 9 Q25 8 29 8.6 Q38.5 10.5 40 21 L40.2 25.4 L42.4 31.2 L39.4 33 L39.4 41 L32.2 41.9 L31.8 46.7 L15.6 46.7 L15.6 39.5 L11 32"/><path d="M15.86,8.16 L18.14,8.16 L19.61,11.09 L21.24,11.76 L24.36,10.73 L25.97,12.34 L24.94,15.46 L25.61,17.09 L28.54,18.56 L28.54,20.84 L25.61,22.31 L24.94,23.94 L25.97,27.06 L24.36,28.67 L21.24,27.64 L19.61,28.31 L18.14,31.24 L15.86,31.24 L14.39,28.31 L12.76,27.64 L9.64,28.67 L8.03,27.06 L9.06,23.94 L8.39,22.31 L5.46,20.84 L5.46,18.56 L8.39,17.09 L9.06,15.46 L8.03,12.34 L9.64,10.73 L12.76,11.76 L14.39,11.09 Z"/><circle cx="17" cy="19.7" r="4.6"/></g></svg>
<svg class="r" style="left:30px;top:665px;" width="42" height="46" viewBox="0 0 42 46"><g fill="none" stroke="#3f4650" stroke-width="3.3" stroke-linecap="round" stroke-linejoin="round"><circle cx="20.2" cy="24.7" r="7.4"/><path d="M16.2 31.5 L16.2 37.4 Q16.2 40.6 20.2 40.6 Q24.1 40.6 24.1 37.4 L24.1 31.5 M17.5 35.5 L23 35.5"/><path d="M19.9 9.6 L19.9 11.4 M9.6 13.9 L10.8 15.2 M30.8 13.9 L29.6 15.2 M4.2 24.7 L6.2 24.7 M34.2 24.7 L36.2 24.7"/></g></svg>
<svg class="r" style="left:30px;top:815px;" width="50" height="50" viewBox="0 0 50 50"><g fill="none" stroke="#3f4650" stroke-width="3.3" stroke-linecap="round" stroke-linejoin="round"><path d="M17.8 11.2 L30.5 11.2 M20.2 11.2 L20.2 22.3 L13.2 41.3 L35 41.3 L28.1 22.3 L28.1 11.2 M20.2 22.3 L28.1 22.3"/></g></svg>
<svg class="r" style="left:30px;top:975px;" width="50" height="40" viewBox="0 0 50 40"><path d="M11 19 L24.8 29 L38.7 9.3" fill="none" stroke="#3f4650" stroke-width="3.3" stroke-linecap="round" stroke-linejoin="round"/></svg>
<svg class="r" style="left:30px;top:1125px;" width="50" height="44" viewBox="0 0 50 44"><path d="M7.7 21 L19 21 L21.5 34.5 L26.7 7.5 L32.5 21 L40.6 21" fill="none" stroke="#3f4650" stroke-width="3.3" stroke-linecap="round" stroke-linejoin="round"/></svg>
<svg class="r" style="left:30px;top:1900px;" width="50" height="50" viewBox="0 0 50 50"><g fill="none" stroke="#3f4650" stroke-width="3.4" stroke-linecap="round" stroke-linejoin="round"><path d="M23.3 39 Q9.5 32.5 8.7 20 L8.7 12.6 Q17 12.2 23.8 8.4 Q30.5 12.4 39.2 13 L38.6 26"/><path d="M28.6 35.4 L32.5 39 L40 31.6"/></g></svg>
<svg class="r" style="left:30px;top:2050px;" width="50" height="50" viewBox="0 0 50 50"><g fill="none" stroke="#3f4650" stroke-width="3.4" stroke-linecap="round"><circle cx="23.8" cy="17.3" r="5.6"/><path d="M13.8 41.2 Q13.6 31.5 23.3 30.8"/><circle cx="34.1" cy="36" r="4.3"/><path d="M37.4 39.4 L41.2 42.8"/></g></svg>
<div class="r" style="left:116.0px;top:0.0px;width:3328.0px;height:132.0px;background:#1b2140;"></div>
<div class="r" style="left:116.0px;top:0.0px;width:16.0px;height:132.0px;background:#242a46;"></div>
<div class="r" style="left:931.0px;top:0.0px;width:2513.0px;height:132.0px;background:#272e4a;"></div>
<div class="r" style="left:929.0px;top:0.0px;width:2.0px;height:132.0px;background:#5b6275;"></div>
<svg class="r" style="left:0px;top:0px;" width="116" height="100" viewBox="0 0 116 100"><polygon points="26.4,43.7 44,43.7 35.4,28.2" fill="#e8999b"/><polygon points="35.4,28.2 53.4,28.2 44,43.7" fill="#e06ac2"/><polygon points="44,43.7 62.7,43.7 53.4,28.2" fill="#b040e8"/><polygon points="53.4,28.2 71.3,28.2 62.7,43.7" fill="#7433e6"/><polygon points="62.7,43.7 80.9,43.7 71.3,28.2" fill="#5b6be0"/><polygon points="71.3,28.2 89.3,28.2 80.9,43.7" fill="#68a3e4"/><polygon points="31,65.5 49,65.5 40,50" fill="#b040e8"/><polygon points="40,50 58,50 49,65.5" fill="#7433e6"/><polygon points="49,65.5 67,65.5 58,50" fill="#5b6be0"/><polygon points="58,50 76.3,50 67,65.5" fill="#68a3e4"/><polygon points="31,65.5 49,65.5 40,81.6" fill="#e06ac2"/><polygon points="40,81.6 57.7,81.6 49,65.5" fill="#e8999b"/></svg>
<svg class="r" style="left:88px;top:28px;filter:drop-shadow(0 1px 2px rgba(0,0,0,0.15));" width="66" height="66" viewBox="0 0 66 66"><circle cx="32" cy="32" r="27" fill="#fff" stroke="#c9ced6" stroke-width="2"/><path d="M28 20.5 L39.5 32 L28 43.5" fill="none" stroke="#7a7a7a" stroke-width="5.2" stroke-linecap="round" stroke-linejoin="round"/></svg>
<svg class="r" style="left:206px;top:43px;" width="44" height="40" viewBox="0 0 44 40"><g fill="none" stroke="#e8e8ea" stroke-width="4" stroke-linecap="round"><rect x="3" y="3" width="37" height="25" rx="4"/><path d="M14 29 L14 36 M29 29 L29 36 M10 36 L33 36"/></g></svg>
<div class="t" style="left:273.0px;top:48.0px;font-size:30px;letter-spacing:0.08px;color:#ffffff;-webkit-text-stroke:0.4px #ffffff;">Credit Default Dataset UI tutorial</div>
<svg class="r" style="left:740px;top:44px;" width="38" height="38" viewBox="0 0 38 38"><g fill="none" stroke="#fff" stroke-width="3.1"><circle cx="10" cy="19" r="5"/><circle cx="28" cy="9" r="5"/><circle cx="28" cy="29" r="5"/><path d="M14.5 16.5 L23.5 11.5 M14.5 21.5 L23.5 26.5"/></g></svg>
<svg class="r" style="left:786px;top:42px;" width="42" height="42" viewBox="0 0 42 42"><g fill="none" stroke="#fff" stroke-width="3.1" stroke-linejoin="round"><path d="M19.51,5.87 L22.49,5.87 L24.48,9.52 L26.66,10.42 L30.64,9.25 L32.75,11.36 L31.58,15.34 L32.48,17.52 L36.13,19.51 L36.13,22.49 L32.48,24.48 L31.58,26.66 L32.75,30.64 L30.64,32.75 L26.66,31.58 L24.48,32.48 L22.49,36.13 L19.51,36.13 L17.52,32.48 L15.34,31.58 L11.36,32.75 L9.25,30.64 L10.42,26.66 L9.52,24.48 L5.87,22.49 L5.87,19.51 L9.52,17.52 L10.42,15.34 L9.25,11.36 L11.36,9.25 L15.34,10.42 L17.52,9.52 Z"/><circle cx="21" cy="21" r="5.2"/></g></svg>
<svg class="r" style="left:850px;top:54px;" width="26" height="20" viewBox="0 0 26 20"><path d="M4.5 5.5 L13 14 L21.5 5.5" fill="none" stroke="#e8e8ea" stroke-width="3" stroke-linecap="round"/></svg>
<svg class="r" style="left:2946px;top:44px;" width="44" height="40" viewBox="0 0 44 40"><g fill="none" stroke="#f0b234" stroke-width="4" stroke-linecap="round" stroke-linejoin="round"><path d="M8 6 L8 24 L4 30 L36 30 L32 24 L32 6"/><path d="M15 31 Q15 38 20 38 Q25 38 25 31"/></g></svg>
<div class="r" style="left:2942.0px;top:22.0px;width:76.0px;height:40.0px;background:#a8231b;border-radius:20px;"></div>
<div class="t" style="left:2951.0px;top:30.5px;font-size:23px;font-weight:700;letter-spacing:1.724px;color:#ffffff;">999+</div>
<div class="r" style="left:3026.0px;top:24.0px;width:80.0px;height:80.0px;background:#c5c6ca;border-radius:50%;"></div>
<div class="t" style="left:3044.0px;top:47.0px;font-size:32px;font-weight:700;letter-spacing:-2.053px;color:#111111;">XC</div>
<div class="t" style="left:3139.0px;top:48.5px;font-size:30px;letter-spacing:0.015px;color:#ffffff;-webkit-text-stroke:0.4px #ffffff;">Xavier Conort</div>
<svg class="r" style="left:3356px;top:52px;" width="30" height="22" viewBox="0 0 30 22"><path d="M5 6 L15 16 L25 6" fill="none" stroke="#e8e8ea" stroke-width="3.4" stroke-linecap="round"/></svg>
<div class="r" style="left:116.0px;top:132.0px;width:3328.0px;height:170.0px;background:#ffffff;"></div>
<div class="r" style="left:116.0px;top:302.0px;width:3328.0px;height:16.0px;background:linear-gradient(rgba(0,0,0,0.07),rgba(0,0,0,0));"></div>
<div class="t" style="left:149.0px;top:174.5px;font-size:36px;font-weight:700;letter-spacing:0.078px;color:#6610f2;">Loan Default by client</div>
<div class="t" style="left:149.0px;top:234.5px;font-size:24px;letter-spacing:0.735px;color:#0f1733;-webkit-text-stroke:0.82px #0f1733;">Use Case Primary Entity:</div>
<div class="r" style="left:446.0px;top:230.0px;width:231.0px;height:35.0px;background:#fff;border:2px solid #b350d8;box-sizing:border-box;border-radius:20px;"></div>
<div class="t" style="left:446px;top:230px;width:231px;height:35px;line-height:35px;text-align:center;font-size:20px;font-weight:700;letter-spacing:0.6px;color:#b350d8">NEW APPLICATION</div>
<div class="t" style="left:725.0px;top:234.5px;font-size:24px;letter-spacing:1.232px;color:#0f1733;-webkit-text-stroke:0.82px #0f1733;">Context:</div>
<div class="r" style="left:834.0px;top:230.0px;width:294.0px;height:35.0px;background:#fff;border:2px solid #5b55e2;box-sizing:border-box;border-radius:20px;"></div>
<div class="t" style="left:834px;top:230px;width:294px;height:35px;line-height:35px;text-align:center;font-size:20px;font-weight:700;letter-spacing:0.6px;color:#5b55e2">NEW LOAN APPLICATION</div>
<div class="t" style="left:1176.0px;top:234.5px;font-size:24px;letter-spacing:1.171px;color:#0f1733;-webkit-text-stroke:0.82px #0f1733;">Target:</div>
<div class="r" style="left:1268.0px;top:230.0px;width:191.0px;height:35.0px;background:#fff;border:2px solid #d9692c;box-sizing:border-box;border-radius:20px;"></div>
<div class="t" style="left:1268px;top:230px;width:191px;height:35px;line-height:35px;text-align:center;font-size:20px;font-weight:700;letter-spacing:0.6px;color:#d9692c">LOAN DEFAULT</div>
<div class="r" style="left:116.0px;top:132.0px;width:3328.0px;height:14.0px;background:linear-gradient(rgba(200,204,212,0.55),rgba(255,255,255,0));"></div>
<div class="r" style="left:116.0px;top:132.0px;width:18.0px;height:2022.0px;background:linear-gradient(90deg,rgba(0,0,0,0.07),rgba(0,0,0,0));"></div>
</body></html>
